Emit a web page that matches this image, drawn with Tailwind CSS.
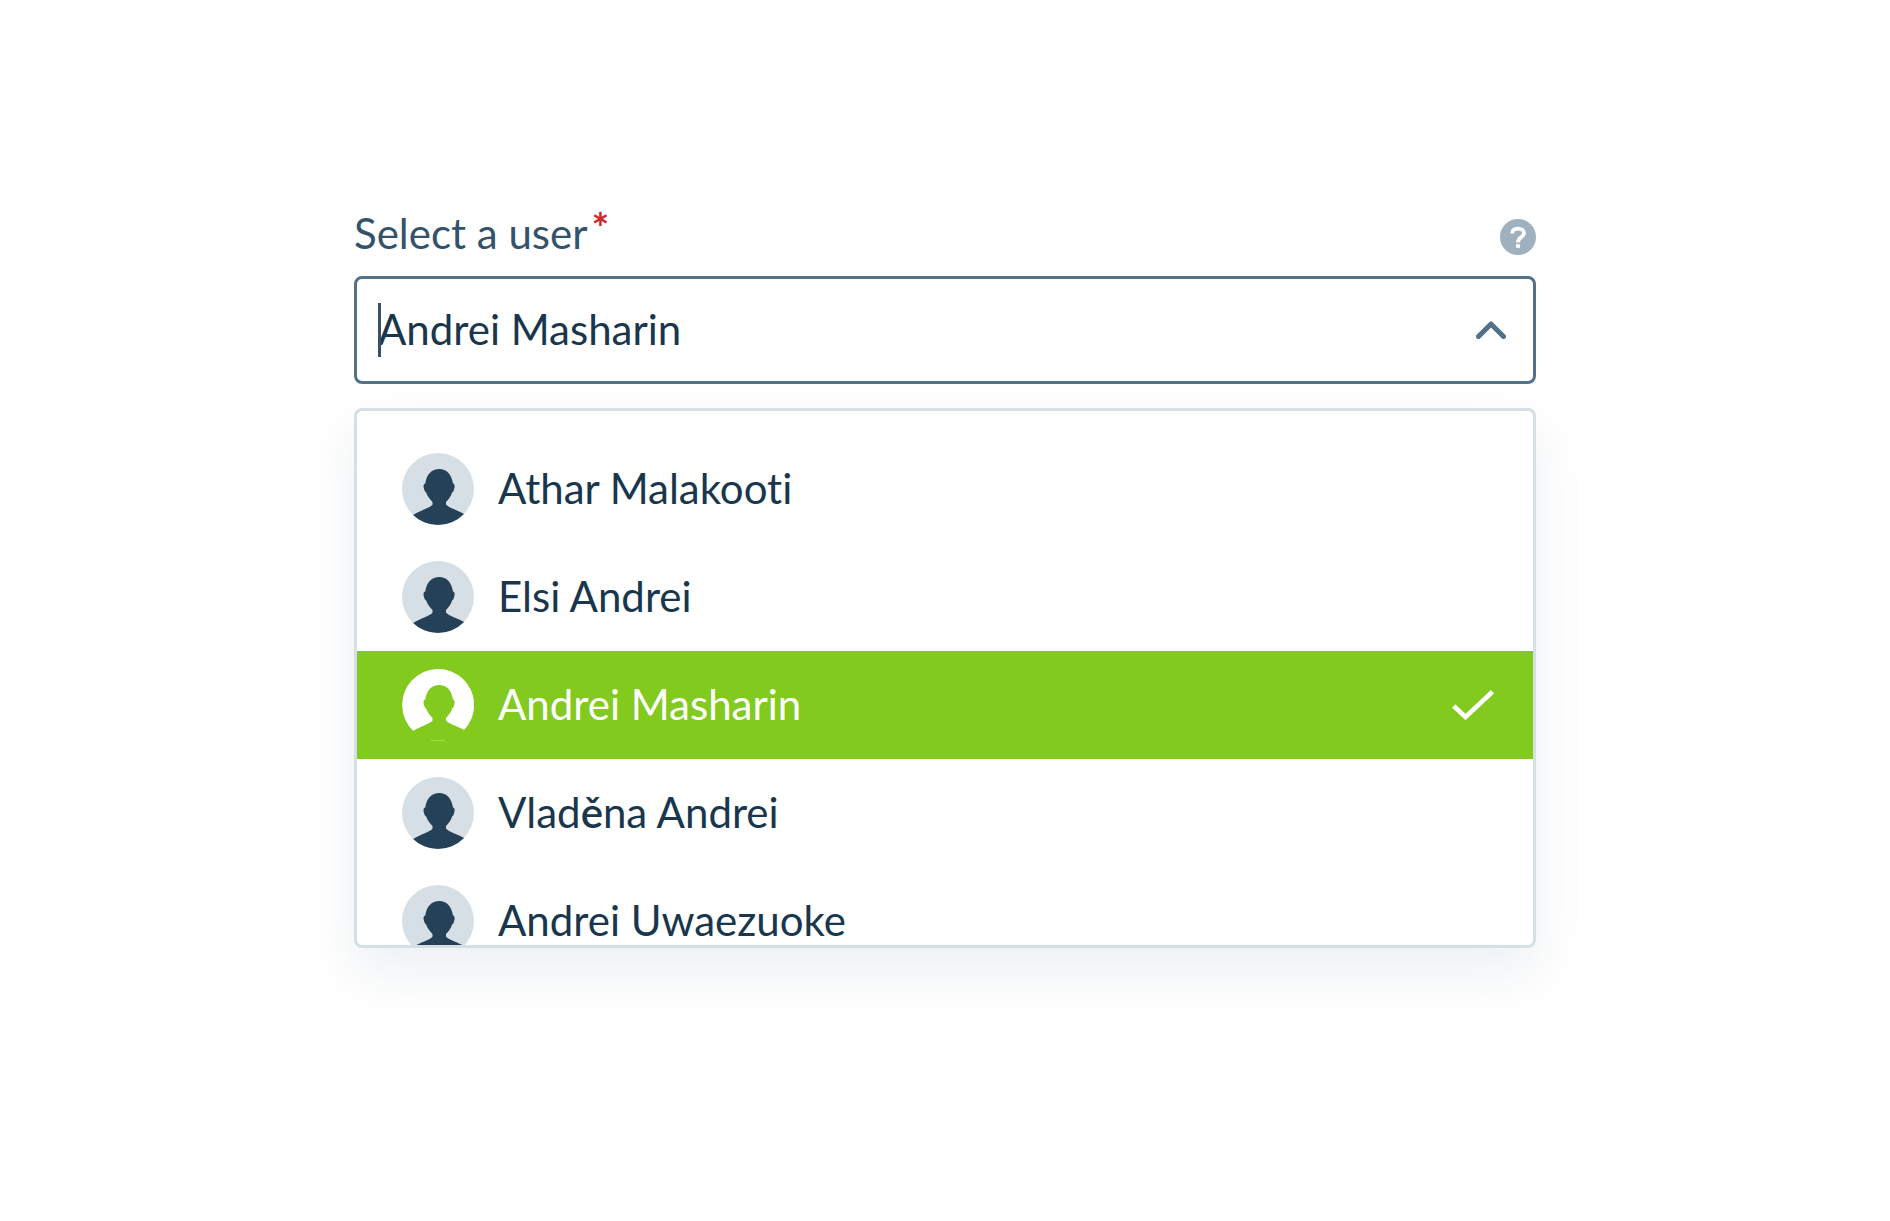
<!DOCTYPE html>
<html lang="en">
<head>
<meta charset="utf-8">
<meta name="viewport" content="width=device-width, initial-scale=1">
<title>Select a user</title>
<script src="https://cdn.jsdelivr.net/npm/@tailwindcss/browser@4"></script>
</head>
<body class="min-h-screen bg-white font-[Lato,'Open_Sans',sans-serif] text-[42px] leading-[54px] text-[#19364d] [font-variant-ligatures:none]">
<svg class="hidden" aria-hidden="true">
  <defs>
    <clipPath id="disc"><circle cx="36" cy="36" r="36"/></clipPath>
    <symbol id="person" viewBox="0 0 72 72">
      <path clip-path="url(#disc)" d="M37.3 16C44.500 16 49.500 21 51 30.500C53 31 53 33.500 52 36.500C51.500 38.500 51 38.800 50.200 39.300C49 43.500 46.500 46.500 44 49V51.500C46 54.500 55 57 62 61V72H11V62C18 57.500 29 54.500 30.500 51.500V49C28 46.500 25.500 43.500 24 39.300C23.200 38.800 22.700 38.500 22.200 36.500C21.200 33.500 21.200 31 23.300 30.500C24.500 21 30 16 37.300 16Z"/>
    </symbol>
  </defs>
</svg>
<main class="mx-auto w-full max-w-[1182px] pt-[206px]">
  <div class="flex items-center justify-between">
    <label for="user" class="flex items-start gap-1 text-[#34536a]">Select a user <span class="leading-[44px] font-bold text-[#cc2a2a]">*</span></label>
    <button type="button" aria-label="Help" class="mt-2 size-9 rounded-full bg-[#9fb0be] text-white">
      <svg viewBox="0 0 36 36" class="size-9" fill="none" stroke="currentColor" stroke-width="3.800"><path d="M12.200 14.400C12.200 11.200 14.700 9.700 18 9.700C21.300 9.700 24 11.400 24 14.200C24 18.300 18 18 18 23.600"/><path d="M16 27H20" stroke-width="3.600"/></svg>
    </button>
  </div>
  <div class="relative mt-4 flex h-[108px] items-center rounded-lg border-3 border-[#517289] bg-white pr-[27px] pl-[21px]">
    <span class="absolute top-6 left-[21px] h-[54px] w-[3px] bg-[#34536a]"></span>
    <input id="user" type="text" role="combobox" aria-expanded="true" aria-controls="users" value="Andrei Masharin" class="h-[54px] min-w-0 flex-1 bg-transparent pb-0.5 outline-none">
    <button type="button" aria-label="Close the list" class="text-[#517289]">
      <svg viewBox="0 0 30 18" class="h-[18px] w-[30px]" fill="none" stroke="currentColor" stroke-width="5" stroke-linecap="round" stroke-linejoin="round"><path d="M2.500 15.500L15 3L27.500 15.500"/></svg>
    </button>
  </div>
  <ul id="users" role="listbox" aria-label="Users" class="mt-6 h-[540px] overflow-hidden rounded-lg border-3 border-[#d5dfe5] bg-white pt-6 shadow-[0_24px_54px_rgba(25,54,90,0.08)]">
    <li role="option" class="flex h-[108px] items-center gap-6 px-[45px]"><svg viewBox="0 0 72 72" class="size-[72px] rounded-full bg-[#d5dfe5] text-[#254158]" fill="currentColor"><use href="#person"/></svg><span class="pb-0.5">Athar Malakooti</span></li>
    <li role="option" class="flex h-[108px] items-center gap-6 px-[45px]"><svg viewBox="0 0 72 72" class="size-[72px] rounded-full bg-[#d5dfe5] text-[#254158]" fill="currentColor"><use href="#person"/></svg><span class="pb-0.5">Elsi Andrei</span></li>
    <li role="option" aria-selected="true" class="flex h-[108px] items-center gap-6 bg-[#82ca1e] pr-[39px] pl-[45px] text-white"><svg viewBox="0 0 72 72" class="size-[72px] text-[#82ca1e]" fill="currentColor"><path fill="#fff" d="M11.300 62A36 36 0 1 1 62 61L36 50Z"/><use href="#person"/><path d="M29 71.300Q36 72.300 43 71.300" fill="none" stroke="#a8da62" stroke-width="1"/></svg><span class="pb-0.5">Andrei Masharin</span>
      <svg viewBox="0 0 42 30" class="ml-auto h-[30px] w-[42px]" fill="none" stroke="currentColor" stroke-width="4.600"><path d="M1.700 16L13.500 27L40.500 1.700"/></svg>
    </li>
    <li role="option" class="flex h-[108px] items-center gap-6 px-[45px]"><svg viewBox="0 0 72 72" class="size-[72px] rounded-full bg-[#d5dfe5] text-[#254158]" fill="currentColor"><use href="#person"/></svg><span class="pb-0.5">Vlad<span class="font-semibold">ě</span>na Andrei</span></li>
    <li role="option" class="flex h-[108px] items-center gap-6 px-[45px]"><svg viewBox="0 0 72 72" class="size-[72px] rounded-full bg-[#d5dfe5] text-[#254158]" fill="currentColor"><use href="#person"/></svg><span class="pb-0.5">Andrei Uwaezuoke</span></li>
  </ul>
</main>
</body>
</html>
